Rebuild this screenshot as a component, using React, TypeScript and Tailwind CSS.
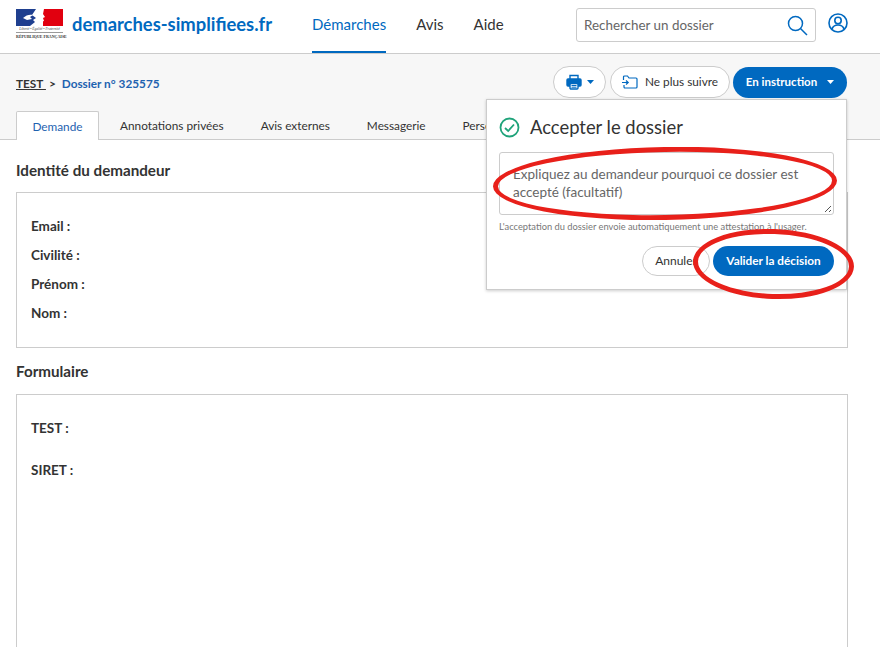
const TABS = ["Annotations privées", "Avis externes", "Messagerie", "Personnes impliquées"];
const IDENTITY = ["Email :", "Civilité :", "Prénom :", "Nom :"];

function Logo() {
  return (
    <div className="flex w-[47px] flex-col">
      <svg width="47" height="17" viewBox="0 0 47 17">
        <rect width="20" height="17" fill="#1f3f8f" />
        <rect x="27" width="20" height="17" fill="#e1000f" />
        <path d="M20 0h8l-1 5 2 3-2 1 1 3-3 1-2 4H14l5-4-2-2 3-2-4-3z" fill="#fff" />
        <path d="M7 9c3-3 7-4 10-3l-3 2 2 2-5 1z" fill="#fff" />
      </svg>
      <div className="mt-[1px] whitespace-nowrap text-center text-[3.5px] leading-[4px] italic text-[#444] [font-family:'Liberation_Serif',serif]">
        Liberté • Égalité • Fraternité
      </div>
      <div className="mt-[1px] h-px w-full bg-[#9a9a9a]" />
      <div className="mt-[1px] whitespace-nowrap text-center text-[4px] leading-[5px] font-bold text-[#333] [font-family:'Liberation_Serif',serif]">
        RÉPUBLIQUE FRANÇAISE
      </div>
    </div>
  );
}

function Printer() {
  return (
    <svg width="16" height="16" viewBox="0 0 16 16" fill="none" stroke="#0069c0" strokeWidth="1.4">
      <path d="M4 5V1.500h8V5" />
      <path d="M4 12H2a1 1 0 0 1-1-1V6a1 1 0 0 1 1-1h12a1 1 0 0 1 1 1v5a1 1 0 0 1-1 1h-2" fill="#0069c0" />
      <rect x="4" y="9.500" width="8" height="5.500" rx="1" fill="#fff" />
      <path d="M5.500 11.500h5M5.500 13.200h5" strokeWidth="1" />
    </svg>
  );
}

function Folder() {
  return (
    <svg width="16" height="14" viewBox="0 0 16 14" fill="none" stroke="#0069c0" strokeWidth="1.2">
      <path d="M1.500 5V2a1 1 0 0 1 1-1h3l1.500 2h7a1 1 0 0 1 1 1v8a1 1 0 0 1-1 1h-11a1 1 0 0 1-1-1v-2" />
      <path d="M0 7.500h6M4 5.500l2.200 2L4 9.500" />
    </svg>
  );
}

function Caret({ color }: { color: string }) {
  return (
    <svg width="7" height="4" viewBox="0 0 7 4">
      <path d="M0 0h7L3.500 4z" fill={color} />
    </svg>
  );
}

export default function App() {
  return (
    <div className="relative h-[647px] w-[880px] overflow-hidden bg-white text-[#333] [font-family:Lato,sans-serif]">
      {/* header */}
      <header className="flex h-[54px] items-start border-b border-[#ccc] bg-white pl-4 pr-[32px]">
        <div className="mt-[9px]">
          <Logo />
        </div>
        <span className="ml-[9px] mt-[10px] text-[18.4px] leading-[28px] font-bold text-[#0069c0]">
          demarches-simplifiees.fr
        </span>
        <nav className="ml-[40px] flex gap-[30px] text-[15px]">
          <a className="h-[53px] border-b-2 border-[#0069c0] pt-[13px] leading-[22px] text-[#0069c0]">Démarches</a>
          <a className="pt-[13px] leading-[22px]">Avis</a>
          <a className="pt-[13px] leading-[22px]">Aide</a>
        </nav>
        <div className="ml-auto mt-[8px] flex h-[34px] w-[240px] items-center justify-between rounded-[3px] border border-[#ccc] pl-[7px] pr-[7px]">
          <span className="text-[13.4px] text-[#666]">Rechercher un dossier</span>
          <svg width="21" height="21" viewBox="0 0 21 21" fill="none" stroke="#0069c0" strokeWidth="1.5">
            <circle cx="8.500" cy="8.500" r="7" />
            <path d="M13.500 13.500l6.500 6.500" />
          </svg>
        </div>
        <svg className="ml-[12px] mt-[13px]" width="20" height="20" viewBox="0 0 20 20" fill="none" stroke="#0069c0" strokeWidth="1.6">
          <circle cx="10" cy="10" r="9" />
          <circle cx="10" cy="7.500" r="3.200" />
          <path d="M4 16c1-3 3.500-4 6-4s5 1 6 4" />
        </svg>
      </header>

      {/* sub header */}
      <div className="h-[86px] border-b border-[#ccc] bg-[#f7f7f7] px-4">
        <div className="flex items-start justify-between pr-[17px]">
          <div className="mt-[22px] flex items-center text-[11.8px] leading-[16px] font-bold">
            <span className="underline">TEST&nbsp;</span>
            <span className="ml-[3px]">&gt;</span>
            <span className="ml-[6px] text-[#1e62b0]">Dossier n° 325575</span>
          </div>
          <div className="mt-[12px] flex items-center">
            <div className="flex h-[32px] w-[53px] items-center justify-center gap-[5px] rounded-full border border-[#ccc] bg-white">
              <Printer />
              <Caret color="#0069c0" />
            </div>
            <div className="ml-[4px] flex h-[32px] w-[120px] items-center justify-center gap-[7px] rounded-full border border-[#ccc] bg-white text-[11.8px]">
              <Folder />
              <span>Ne plus suivre</span>
            </div>
            <div className="ml-[3px] flex h-[31px] w-[114px] items-center justify-center gap-[10px] rounded-full bg-[#0069c0] text-[11.5px] font-bold text-white">
              <span>En instruction</span>
              <Caret color="#fff" />
            </div>
          </div>
        </div>
        {/* tabs */}
        <div className="mt-[13px] flex items-end text-[11.8px]">
          <div className="z-10 mb-[-1px] flex h-[29px] w-[83px] items-center justify-center rounded-t-[2px] border border-b-0 border-[#ccc] bg-white pt-px text-[#1e62b0]">
            Demande
          </div>
          {TABS.map((tab, i) => (
            <div
              key={tab}
              className={`flex h-[28px] items-center whitespace-nowrap pt-px ${i === 0 ? "ml-[21px]" : "ml-[37px]"}`}
            >
              {tab}
            </div>
          ))}
        </div>
      </div>

      {/* content */}
      <main className="px-4">
        <h2 className="mt-[20px] text-[15.2px] leading-[20px] font-bold">Identité du demandeur</h2>
        <section className="mt-[12px] h-[156px] w-[832px] border border-[#ccc] px-[14px] pt-[23px]">
          <div className="flex flex-col gap-[9px]">
            {IDENTITY.map((label) => (
              <div key={label} className="text-[13.5px] leading-[20px] font-bold">
                {label}
              </div>
            ))}
          </div>
        </section>
        <h2 className="mt-[13px] text-[15.2px] leading-[20px] font-bold">Formulaire</h2>
        <section className="mt-[13px] h-[300px] w-[832px] border border-[#ccc] px-[14px] pt-[23px]">
          <div className="text-[13.5px] leading-[20px] font-bold">TEST :</div>
          <div className="mt-[22px] text-[13.5px] leading-[20px] font-bold">SIRET :</div>
        </section>
      </main>

      {/* dropdown */}
      <div className="absolute left-[486px] top-[99px] h-[191px] w-[361px] border border-[#ccc] bg-white px-[12px] pt-[14px] shadow-[0_1px_3px_rgba(0,0,0,0.2)]">
        <div className="flex items-center gap-[10px]">
          <svg width="21" height="21" viewBox="0 0 21 21" fill="none" stroke="#1fa37a" strokeWidth="1.8">
            <circle cx="10.500" cy="10.500" r="9" />
            <path d="M6 11l3.200 3L15 7.500" />
          </svg>
          <span className="text-[18.4px] leading-[26px]">Accepter le dossier</span>
        </div>
        <div className="relative mt-[12px] h-[63px] w-[335px] rounded-[3px] border border-[#ccc] px-[13px] pt-[12px] text-[13.5px] leading-[18px] text-[#666]">
          Expliquez au demandeur pourquoi ce dossier est accepté (facultatif)
          <svg className="absolute bottom-[1px] right-[1px]" width="8" height="8" viewBox="0 0 8 8" stroke="#555" strokeWidth="1">
            <path d="M1 7l6-6M5 7l2-2" />
          </svg>
        </div>
        <p className="mt-[5px] whitespace-nowrap text-[9.300px] leading-[14px] text-[#777]">
          L'acceptation du dossier envoie automatiquement une attestation à l'usager.
        </p>
        <div className="mt-[12px] flex justify-end gap-[3px]">
          <div className="flex h-[30px] w-[68px] items-center justify-center rounded-full border border-[#ccc] text-[12px]">
            Annuler
          </div>
          <div className="flex h-[30px] w-[121px] items-center justify-center rounded-full bg-[#0069c0] text-[11.8px] font-bold text-white">
            Valider la décision
          </div>
        </div>
      </div>

      {/* red annotations */}
      <div className="absolute left-[493px] top-[147px] h-[73px] w-[344px] rotate-[-1deg] rounded-[50%] border-[5px] border-[#e8201a]" />
      <div className="absolute left-[693px] top-[229px] h-[70px] w-[161px] rotate-[2deg] rounded-[50%] border-[5px] border-[#e8201a]" />
    </div>
  );
}
